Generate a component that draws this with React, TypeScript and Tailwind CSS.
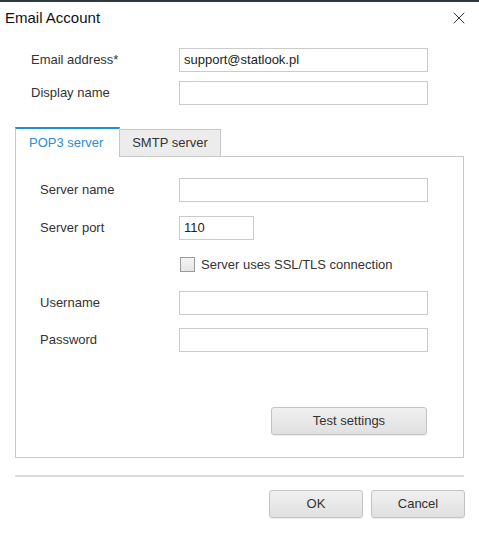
import { X } from 'lucide-react';

const font = { fontFamily: '"Liberation Sans", Arial, sans-serif' };

function Field({ label, value = '', width = 'w-[249px]', labelWidth = 'w-[148px]' }: { label: string; value?: string; width?: string; labelWidth?: string }) {
  return (
    <div className="flex items-center">
      <span className={`${labelWidth} text-[13px] text-[#333]`}>{label}</span>
      <div className={`${width} h-[24px] border border-[#cbcbcb] bg-white px-[4px] flex items-center text-[13px] text-[#222]`}>{value}</div>
    </div>
  );
}

function Button({ children, className = '' }: { children: React.ReactNode; className?: string }) {
  return (
    <button
      className={`h-[28px] rounded-[3px] border border-[#c4c4c4] bg-gradient-to-b from-[#f0f0f0] to-[#e0e0e0] text-[13px] text-[#333] shadow-[0_1px_1px_rgba(0,0,0,0.08)] ${className}`}
    >
      {children}
    </button>
  );
}

export default function App() {
  return (
    <div className="w-[479px] h-[533px] bg-white border-t-[2px] border-[#2d3a40] flex flex-col" style={font}>
      {/* title bar */}
      <div className="h-[32px] flex items-center justify-between pl-[5px] pr-[10px]">
        <span className="text-[15px] text-[#111]">Email Account</span>
        <X className="w-[20px] h-[20px] text-[#222]" strokeWidth={1.1} />
      </div>

      <div className="flex flex-col gap-[9px] pl-[31px] mt-[14px]">
        <Field label="Email address*" value="support@statlook.pl" />
        <Field label="Display name" />
      </div>

      {/* tabs */}
      <div className="mx-[15px] mt-[22px] flex items-end">
        <div className="h-[30px] w-[105px] border-t-[2px] border-x border-t-[#1e8fd8] border-x-[#c8c8c8] bg-white flex items-center pl-[13px] text-[13px] text-[#2b8ed6] -mb-px relative z-10">
          POP3 server
        </div>
        <div className="h-[27px] w-[101px] border-t border-r border-[#c8c8c8] bg-[#ececec] flex items-center justify-center text-[13px] text-[#333]">
          SMTP server
        </div>
      </div>

      <div className="mx-[15px] h-[302px] border border-[#c8c8c8] flex flex-col pl-[24px] pt-[21px]">
        <div className="flex flex-col gap-[14px]">
          <Field label="Server name" labelWidth="w-[139px]" />
          <Field label="Server port" value="110" width="w-[75px]" labelWidth="w-[139px]" />
        </div>
        <div className="flex items-center mt-[15px] ml-[140px]">
          <div className="w-[15px] h-[15px] border border-[#9a9a9a] bg-gradient-to-b from-[#f4f4f4] to-[#e6e6e6]" />
          <span className="ml-[6px] text-[13px] text-[#333]">Server uses SSL/TLS connection</span>
        </div>
        <div className="flex flex-col gap-[13px] mt-[16px]">
          <Field label="Username" labelWidth="w-[139px]" />
          <Field label="Password" labelWidth="w-[139px]" />
        </div>
        <div className="flex justify-end pr-[36px] mt-[55px]">
          <Button className="w-[156px]">Test settings</Button>
        </div>
      </div>

      <div className="mx-[15px] mt-[17px] h-[2px] bg-[#dcdcdc]" />

      <div className="flex justify-end gap-[8px] mr-[14px] mt-[13px]">
        <Button className="w-[94px] border-[#a9a9a9] from-[#e8e8e8] to-[#d6d6d6]">OK</Button>
        <Button className="w-[94px]">Cancel</Button>
      </div>
    </div>
  );
}
